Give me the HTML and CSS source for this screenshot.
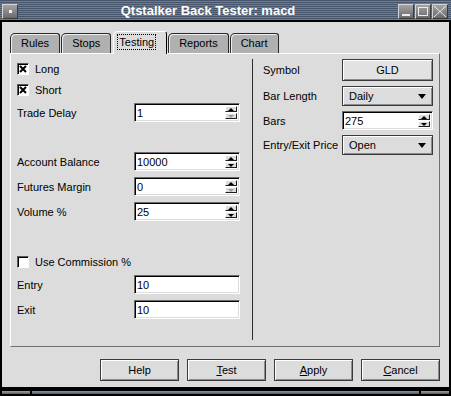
FILE: index.html
```html
<!DOCTYPE html>
<html lang="en">
<head>
    <meta charset="UTF-8">
    <title>Qtstalker Back Tester: macd</title>
    <link rel="stylesheet" href="styles.css">
</head>
<body>
<div class="window">
    <div class="titlebar">
        <span class="tb-btn"><span class="dot"></span></span>
        <span class="title">Qtstalker Back Tester: macd</span>
        <span class="tb-group">
            <span class="tb-btn"><svg width="14" height="13"><rect x="3" y="9" width="8" height="2" fill="#ececec"/></svg></span>
            <span class="tb-btn"><svg width="14" height="13"><rect x="2.5" y="2.5" width="9" height="8" fill="none" stroke="#ececec"/></svg></span>
            <span class="tb-btn"><svg width="14" height="13"><path d="M1 1L13 12M13 1L1 12" stroke="#ececec" stroke-width="1"/></svg></span>
        </span>
    </div>

    <div class="client">
        <div class="tabs">
            <div class="tab">Rules</div>
            <div class="tab">Stops</div>
            <div class="tab active"><span class="focus">Testing</span></div>
            <div class="tab">Reports</div>
            <div class="tab">Chart</div>
        </div>

        <div class="panel">
            <div class="col-left">
                <div class="row check first">
                    <span class="box"><svg width="8" height="8"><path d="M1 1L7 7M7 1L1 7" stroke="#000" stroke-width="2"/></svg></span>
                    <span class="check-label">Long</span>
                </div>
                <div class="row check sp-2">
                    <span class="box"><svg width="8" height="8"><path d="M1 1L7 7M7 1L1 7" stroke="#000" stroke-width="2"/></svg></span>
                    <span class="check-label">Short</span>
                </div>
                <div class="row sp-4">
                    <span class="label">Trade Delay</span>
                    <div class="spin">
                        <span class="value">1</span>
                        <span class="spin-btns"><span><i class="up"></i></span><span><i class="down off"></i></span></span>
                    </div>
                </div>

                <div class="row sp-30">
                    <span class="label">Account Balance</span>
                    <div class="spin">
                        <span class="value">10000</span>
                        <span class="spin-btns"><span><i class="up"></i></span><span><i class="down"></i></span></span>
                    </div>
                </div>
                <div class="row">
                    <span class="label">Futures Margin</span>
                    <div class="spin">
                        <span class="value">0</span>
                        <span class="spin-btns"><span><i class="up"></i></span><span><i class="down off"></i></span></span>
                    </div>
                </div>
                <div class="row">
                    <span class="label">Volume %</span>
                    <div class="spin">
                        <span class="value">25</span>
                        <span class="spin-btns"><span><i class="up"></i></span><span><i class="down"></i></span></span>
                    </div>
                </div>

                <div class="row check sp-31">
                    <span class="box"></span>
                    <span class="check-label">Use Commission %</span>
                </div>
                <div class="row sp-4">
                    <span class="label">Entry</span>
                    <div class="spin"><span class="value">10</span></div>
                </div>
                <div class="row">
                    <span class="label">Exit</span>
                    <div class="spin"><span class="value">10</span></div>
                </div>
            </div>

            <div class="col-right">
                <div class="rrow">
                    <span class="rlabel">Symbol</span>
                    <div class="push">GLD</div>
                </div>
                <div class="rrow">
                    <span class="rlabel">Bar Length</span>
                    <div class="combo"><span>Daily</span><i class="drop"></i></div>
                </div>
                <div class="rrow">
                    <span class="rlabel">Bars</span>
                    <div class="spin wide">
                        <span class="value">275</span>
                        <span class="spin-btns"><span><i class="up"></i></span><span><i class="down"></i></span></span>
                    </div>
                </div>
                <div class="rrow">
                    <span class="rlabel">Entry/Exit Price</span>
                    <div class="combo"><span>Open</span><i class="drop"></i></div>
                </div>
            </div>
        </div>

        <div class="buttons">
            <button class="btn">Help</button>
            <button class="btn"><u>T</u>est</button>
            <button class="btn"><u>A</u>pply</button>
            <button class="btn"><u>C</u>ancel</button>
        </div>
    </div>

    <div class="frame-bottom">
        <span class="handle"></span>
        <span class="bar"></span>
        <span class="handle"></span>
    </div>
</div>
</body>
</html>
```

FILE: styles.css
```css
* {
    box-sizing: border-box;
}
body {
    margin: 0;
    background: #000;
    font-family: "Liberation Sans", Arial, sans-serif;
    font-size: 11px;
    color: #000;
}
.window {
    width: 451px;
    height: 396px;
    background: #000;
    display: flex;
    flex-direction: column;
    overflow: hidden;
}

/* title bar */
.titlebar {
    height: 20px;
    display: flex;
    align-items: center;
    padding: 2px 3px 0 2px;
    background: repeating-linear-gradient(to bottom, #46556b 0, #46556b 1px, #6c7c91 1px, #6c7c91 2px);
}
.title {
    flex: 1;
    text-align: center;
    color: #fff;
    font-weight: bold;
    font-size: 13px;
    line-height: 16px;
}
.tb-group {
    display: flex;
    gap: 1px;
}
.tb-btn {
    width: 16px;
    height: 15px;
    display: flex;
    align-items: center;
    justify-content: center;
    background: linear-gradient(#a4a4a4, #6a6a6a);
    border: 1px solid;
    border-color: #d4d4d4 #3c3c3c #3c3c3c #d4d4d4;
}
.dot {
    width: 3px;
    height: 3px;
    background: #f0f0f0;
}

/* client area */
.client {
    height: 365px;
    margin: 2px 2px 0;
    background: #dcdcdc;
    padding: 9px 9px 0 8px;
    display: flex;
    flex-direction: column;
}
.tabs {
    display: flex;
    align-items: flex-end;
    height: 22px;
    position: relative;
    z-index: 1;
}
.tab {
    height: 20px;
    padding: 0 10px;
    line-height: 19px;
    margin-right: 1px;
    background: #b0b0b0;
    border: 1px solid #2a2a2a;
    border-bottom: 0;
    border-radius: 5px 3px 0 0;
    box-shadow: inset 1px 1px 0 #eeeeee;
}
.tab.active {
    height: 23px;
    margin: 0 1px -1px 1px;
    padding: 2px 10px 0 3px;
    line-height: 14px;
    background: #dcdcdc;
    border-color: #fff #000 #dcdcdc #fff;
    box-shadow: none;
}
.focus {
    display: inline-block;
    border: 1px dotted #000;
    padding: 0 1px;
    line-height: 14px;
}
.panel {
    height: 294px;
    background: #dcdcdc;
    border: 1px solid;
    border-color: #fff #707070 #707070 #fff;
    display: flex;
}
.col-left {
    width: 241px;
    padding: 5px 0 0 6px;
    display: flex;
    flex-direction: column;
}
.col-right {
    flex: 1;
    margin: 5px 0 6px;
    padding-left: 10px;
    border-left: 1px solid #2e2e2e;
    display: flex;
    flex-direction: column;
    gap: 5px;
}

/* rows */
.row {
    display: flex;
    align-items: center;
    height: 19px;
    margin-top: 6px;
}
.row.first { margin-top: 0; }
.row.sp-2 { margin-top: 2px; }
.row.sp-4 { margin-top: 4px; }
.row.sp-30 { margin-top: 30px; }
.row.sp-31 { margin-top: 31px; }
.label {
    width: 117px;
}
.box {
    width: 12px;
    height: 12px;
    display: flex;
    align-items: center;
    justify-content: center;
    background: #fff;
    border: 1px solid;
    border-color: #5a5a5a #fff #fff #5a5a5a;
    box-shadow: inset 1px 1px 0 #000;
}
.check-label {
    margin-left: 6px;
}

/* inputs */
.spin {
    width: 106px;
    height: 19px;
    display: flex;
    background: #fff;
    border: 1px solid;
    border-color: #6a6a6a #fff #fff #6a6a6a;
    box-shadow: inset 1px 1px 0 #000, inset -1px -1px 0 #dcdcdc;
    padding: 2px;
}
.spin.wide {
    width: 91px;
}
.spin .value {
    flex: 1;
    line-height: 14px;
}
.spin-btns {
    width: 12px;
    display: flex;
    flex-direction: column;
    gap: 1px;
}
.spin-btns span {
    flex: 1;
    display: flex;
    align-items: center;
    justify-content: center;
    background: #dcdcdc;
    border: 1px solid;
    border-color: #fff #1e1e1e #1e1e1e #fff;
}
.up {
    border-left: 3px solid transparent;
    border-right: 3px solid transparent;
    border-bottom: 3px solid #000;
}
.down {
    border-left: 3px solid transparent;
    border-right: 3px solid transparent;
    border-top: 3px solid #000;
}
.down.off {
    border-top-color: #9a9a9a;
}

/* right column */
.rrow {
    display: flex;
    align-items: center;
}
.rlabel {
    width: 79px;
}
.push,
.combo,
.btn {
    background: #dcdcdc;
    border: 1px solid #3a3a3a;
    box-shadow: inset 1px 1px 0 #fff, inset -1px -1px 0 #8c8c8c;
}
.push {
    width: 91px;
    height: 22px;
    line-height: 20px;
    text-align: center;
    background: #e2e2e2;
}
.combo {
    width: 91px;
    height: 20px;
    display: flex;
    align-items: center;
    justify-content: space-between;
    padding: 0 6px;
}
.drop {
    border-left: 4px solid transparent;
    border-right: 4px solid transparent;
    border-top: 5px solid #000;
}

/* dialog buttons */
.buttons {
    margin-top: 12px;
    display: flex;
    justify-content: flex-end;
    gap: 8px;
}
.btn {
    width: 79px;
    height: 22px;
    padding: 0;
    font-family: inherit;
    font-size: 11px;
    color: #000;
}

/* bottom frame */
.frame-bottom {
    height: 9px;
    padding: 4px 2px 2px;
    display: flex;
    gap: 2px;
}
.handle {
    width: 28px;
    background: linear-gradient(#a0a0a0, #5c5c5c);
}
.bar {
    flex: 1;
    background: linear-gradient(#8496ac, #4d5d72);
}
```
